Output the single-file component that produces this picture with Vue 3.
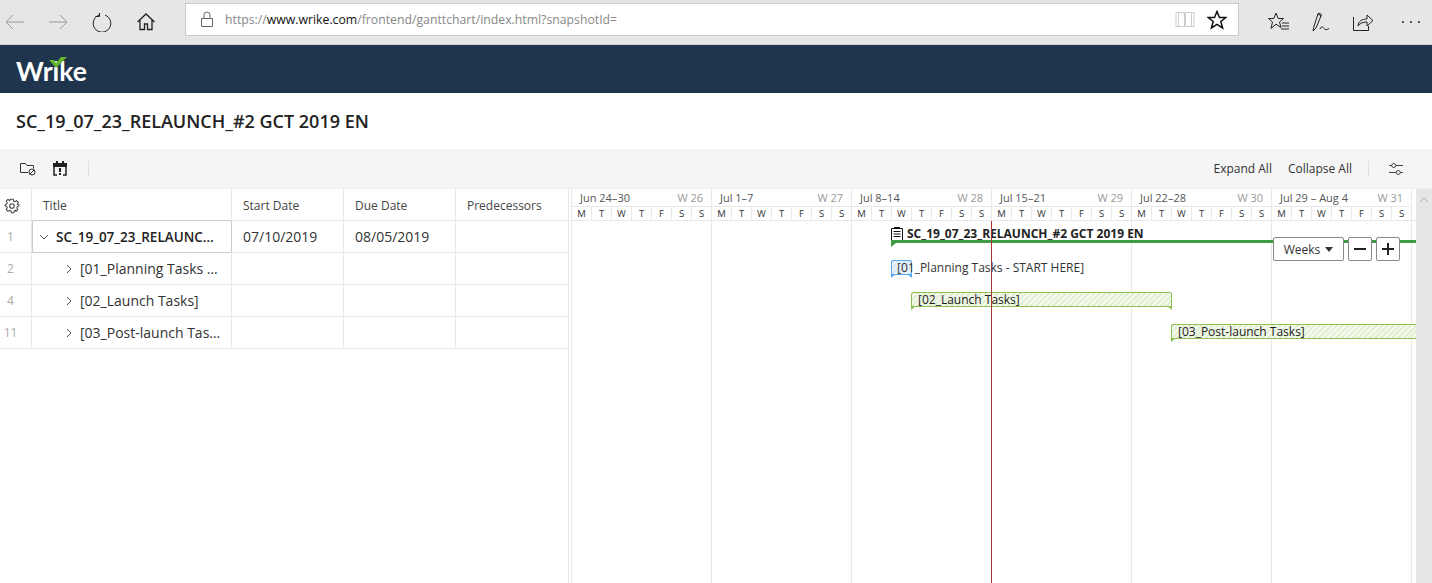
<script setup>
const rows = [
  { n: 1, title: 'SC_19_07_23_RELAUNCH_#2 GCT 2019 EN', start: '07/10/2019', due: '08/05/2019', open: true, root: true },
  { n: 2, title: '[01_Planning Tasks - START HERE]', start: '', due: '' },
  { n: 4, title: '[02_Launch Tasks]', start: '', due: '' },
  { n: 11, title: '[03_Post-launch Tasks]', start: '', due: '' },
]
const weeks = [
  ['Jun 24–30', 'W 26'],
  ['Jul 1–7', 'W 27'],
  ['Jul 8–14', 'W 28'],
  ['Jul 15–21', 'W 29'],
  ['Jul 22–28', 'W 30'],
  ['Jul 29 – Aug 4', 'W 31'],
]
const days = ['M', 'T', 'W', 'T', 'F', 'S', 'S']
</script>

<template>
  <div class="page">
    <div class="browser">
      <div class="nav">
        <svg class="ic muted" width="22" height="16" viewBox="0 0 22 16"><path d="M20 8H2M9 1 2 8l7 7" /></svg>
        <svg class="ic muted" width="22" height="16" viewBox="0 0 22 16"><path d="M2 8h18M13 1l7 7-7 7" /></svg>
        <svg class="ic" width="20" height="20" viewBox="0 0 20 20"><path d="M7 2.600A8.800 8.800 0 1 0 13 2.600M7.500 .5v3.500H3.500" transform="translate(0 .5)" /></svg>
        <svg class="ic" width="20" height="20" viewBox="0 0 20 20"><path d="M1.500 10 10 2l8.500 8M4 8v9.500h4.500V12h3v5.500H16V8" stroke-width="1.300" /></svg>
      </div>
      <div class="address">
        <svg class="ic lock" width="14" height="17" viewBox="0 0 14 17"><path d="M1.500 7.500h11v8h-11zM4 7.500V4a3 3 0 0 1 6 0v3.500" /></svg>
        <div class="url">https://<b>www.wrike.com</b>/frontend/ganttchart/index.html?snapshotId=</div>
        <svg class="ic book" width="20" height="17" viewBox="0 0 20 17"><path d="M1 1.500h8.500v14H1zM10.500 1.500H19v14h-8.500zM3.500 1.500v14M16.500 1.500v14" /></svg>
        <svg class="ic star" width="20" height="20" viewBox="0 0 20 20"><path d="m10 1.500 2.500 6h6.300l-5 4 1.800 6.500L10 14.300 4.400 18l1.800-6.500-5-4h6.300z" /></svg>
      </div>
      <div class="tools">
        <svg class="ic" width="22" height="20" viewBox="0 0 22 20"><path d="m8 1 2.200 5.500H15.500l-4 3.500 1.500 5.500-5-3.300-5 4.300 1.500-6.500L.5 6.500h5.300zM14 11h7M14 14h7M13 17h8" /></svg>
        <svg class="ic" width="20" height="20" viewBox="0 0 20 20"><path d="M3 14 2 19l3-3 5-12-3-2zM6.500 3.500l1-2.500 3 1.500-1 2.500M9 17c2-4 3-2 4-.5s2.500 1.500 5 0" /></svg>
        <svg class="ic" width="22" height="20" viewBox="0 0 22 20"><path d="M1.500 5v13.500h15V14M6 14c.5-5 4-7 9-7V3l6 5.500-6 5.500v-4c-4 0-7 1-9 4z" /></svg>
        <div class="dots"><i></i><i></i><i></i></div>
      </div>
    </div>

    <header class="brand">
      <div class="logo">
        <span>Wrike</span>
        <svg width="18" height="11" viewBox="0 0 18 11"><path d="M0 3h5l2 3 5-6h6L7 11z" fill="#65b32e" /></svg>
      </div>
    </header>

    <h1 class="title">SC_19_07_23_RELAUNCH_#2 GCT 2019 EN</h1>

    <div class="toolbar">
      <div class="group">
        <svg class="tb" width="16" height="14" viewBox="0 0 16 14"><path d="M.500 1.500h5l1.500 2h6.500v3M.500 1.500v9h7.500" fill="none" stroke="#333" /><circle cx="12" cy="10" r="3" fill="none" stroke="#333" /><path d="m10 12 4-4" stroke="#333" /></svg>
        <svg class="tb" width="14" height="15" viewBox="0 0 14 15"><path d="M0 2h14v4H0z" fill="#222" /><path d="M3 0h2v3H3zM9 0h2v3H9z" fill="#222" /><path d="M1 6v8h3M13 6v8h-3" fill="none" stroke="#222" stroke-width="1.500" /><path d="M6 7h2v4H6zM6 12h2v2H6z" fill="#222" /></svg>
        <span class="sep"></span>
      </div>
      <div class="group right">
        <span class="link">Expand All</span>
        <span class="link">Collapse All</span>
        <span class="sep"></span>
        <svg class="tb" width="14" height="14" viewBox="0 0 14 14" fill="none" stroke="#444"><path d="M0 3.500h2.500M7 3.500h7M0 10.500h7M11.500 10.500H14" /><circle cx="4.700" cy="3.500" r="2" /><circle cx="9.300" cy="10.500" r="2" /></svg>
      </div>
    </div>

    <main class="content">
      <section class="table">
        <div class="row head">
          <div class="c num">
            <svg width="16" height="16" viewBox="0 0 24 24" fill="none" stroke="#444" stroke-width="1.700"><circle cx="12" cy="12" r="3.400" /><path d="M10 2h4l.6 3 2.400 1 2.600-1.700 2.800 2.800L20.700 10l2.300.8v2.400l-2.300.8-1 2.200 1.700 2.700-2.800 2.800L18 20l-2.400 1-.6 3h-4l-.6-3L8 20l-2.600 1.700-2.800-2.800L4.300 16l-1-2.200L1 13v-2.400L3.300 10l1-2.200-1.700-2.700 2.800-2.800L8 4z" transform="translate(12 12) scale(.92) translate(-12 -13)" /></svg>
          </div>
          <div class="c t">Title</div>
          <div class="c d">Start Date</div>
          <div class="c d">Due Date</div>
          <div class="c d">Predecessors</div>
        </div>
        <div v-for="r in rows" :key="r.n" class="row">
          <div class="c num n">{{ r.n }}</div>
          <div class="c t" :class="{ sel: r.root }">
            <svg class="chev" :class="{ deep: !r.root }" width="10" height="10" viewBox="0 0 10 10" fill="none" stroke="#555">
              <path :d="r.open ? 'M1 3l4 4 4-4' : 'M3 1l4 4-4 4'" />
            </svg>
            <span class="ttl" :class="{ bold: r.root }">{{ r.title }}</span>
          </div>
          <div class="c d">{{ r.start }}</div>
          <div class="c d">{{ r.due }}</div>
          <div class="c d"></div>
        </div>
      </section>

      <section class="gantt">
        <div class="weeks">
          <div v-for="w in weeks" :key="w[0]" class="week">
            <div class="wtop"><span>{{ w[0] }}</span><em>{{ w[1] }}</em></div>
            <div class="wdays"><span v-for="(d, i) in days" :key="i">{{ d }}</span></div>
          </div>
        </div>
        <div class="canvas">
          <div class="cols"><div v-for="w in weeks" :key="w[0]"></div></div>

          <div class="task root">
            <svg width="12" height="14" viewBox="0 0 12 14" fill="none" stroke="#111"><path d="M.500 1.500h11v12H.500zM2.500 4.500h7M2.500 7h7M2.500 9.500h7" /><path d="M3 0h6v2H3z" fill="#111" stroke="none" /></svg>
            <span>SC_19_07_23_RELAUNCH_#2 GCT 2019 EN</span>
          </div>
          <div class="rootbar"></div>

          <div class="bar blue"></div>
          <div class="lbl">[01_Planning Tasks - START HERE]</div>

          <div class="bar green b2"><span>[02_Launch Tasks]</span></div>
          <div class="bar green b3"><span>[03_Post-launch Tasks]</span></div>

          <div class="today"></div>

          <div class="zoom">
            <button class="btn weeksel">Weeks <i></i></button>
            <button class="btn sq"><svg width="14" height="14" viewBox="0 0 14 14"><path d="M1 7h12" stroke="#222" stroke-width="2" /></svg></button>
            <button class="btn sq"><svg width="14" height="14" viewBox="0 0 14 14"><path d="M1 7h12M7 1v12" stroke="#222" stroke-width="2" /></svg></button>
          </div>
        </div>
      </section>

      <aside class="scroll">
        <svg width="10" height="6" viewBox="0 0 10 6" fill="none" stroke="#aaa"><path d="m1 5 4-4 4 4" /></svg>
      </aside>
    </main>
  </div>
</template>

<style>
html, body { margin: 0; background: #fff; }
</style>

<style scoped>
.page {
  width: 1432px;
  height: 583px;
  overflow: hidden;
  display: flex;
  flex-direction: column;
  font-family: "Open Sans", sans-serif;
  color: #333;
  font-size: 12px;
}
.ic { fill: none; stroke: #222; stroke-width: 1; display: block; }
.ic.muted { stroke: #999; }
.ic.star { stroke-width: 1.500; stroke: #111; }
.browser {
  height: 45px;
  flex: none;
  box-sizing: border-box;
  background: #e6e6e6;
  border-bottom: 1px solid #ccc;
  display: flex;
  align-items: center;
}
.nav { width: 185px; flex: none; display: flex; align-items: center; padding-left: 4px; box-sizing: border-box; gap: 21px; }
.nav svg:nth-child(3) { margin-left: 2px; }
.nav svg:nth-child(4) { margin-left: 3px; }
.address {
  width: 1054px;
  height: 33px;
  flex: none;
  box-sizing: border-box;
  margin-top: -5px;
  background: #fff;
  border: 1px solid #ccc;
  display: flex;
  align-items: center;
  padding: 0 11px 0 14px;
}
.lock { stroke: #666; }
.url { flex: 1; margin-left: 11px; font-size: 12.250px; color: #888; }
.url b { font-weight: 400; color: #111; }
.book { stroke: #ccc; margin-right: 12px; }
.tools { flex: 1; display: flex; align-items: center; padding-left: 29px; gap: 21px; margin-top: -1px; }
.dots { display: flex; gap: 6px; margin-left: 7px; }
.dots i { width: 2px; height: 2px; background: #222; border-radius: 50%; }

.brand { height: 48px; flex: none; background: #1f354d; display: flex; align-items: center; padding-left: 16px; }
.logo { position: relative; color: #fff; font: 700 26.500px/1 "Lato", sans-serif; margin-top: 4px; }
.logo svg { position: absolute; left: 33px; top: -1px; }

.title { margin: 0; height: 56px; flex: none; box-sizing: border-box; padding-left: 16px; font-size: 18px; font-weight: 600; color: #222; line-height: 56px; }

.toolbar {
  height: 40px;
  flex: none;
  box-sizing: border-box;
  background: #f5f5f5;
  border-bottom: 1px solid #eee;
  display: flex;
  justify-content: space-between;
  align-items: center;
  padding: 0 29px 0 20px;
}
.group { display: flex; align-items: center; gap: 17px; }
.group.right { gap: 16px; }
.sep { width: 1px; height: 16px; background: #ddd; margin-left: 4px; }
.group.right .sep { margin-left: 0; margin-right: 4px; }
.link { font-size: 12px; color: #333; }

.content { flex: 1; display: flex; min-height: 0; }
.table { width: 569px; flex: none; box-sizing: border-box; border-right: 1px solid #e8e8e8; }
.row { height: 32px; display: flex; border-bottom: 1px solid #e8e8e8; box-sizing: border-box; font-size: 14px; }
.row.head { font-size: 12px; color: #444; }
.head .c { padding-top: 2px; }
.c { display: flex; align-items: center; border-right: 1px solid #e8e8e8; box-sizing: border-box; padding-left: 11px; min-width: 0; }
.c:last-child { border-right: 0; }
.num { width: 32px; padding-left: 0; justify-content: center; flex: none; }
.num.n { color: #aaa; font-size: 12px; padding-right: 10px; }
.head .num { justify-content: flex-start; padding-left: 4px; }
.t { width: 200px; flex: none; }
.d { width: 112px; flex: none; }
.sel { border: 1px solid #ccc; border-radius: 2px; height: 33px; margin-top: -1px; padding-left: 6px; }
.chev { flex: none; margin-right: 7px; }
.chev.deep { margin-left: 21px; margin-right: 6px; }
.ttl { white-space: nowrap; overflow: hidden; text-overflow: ellipsis; padding-right: 10px; }
.bold { font-weight: 600; color: #222; font-size: 13.500px; }

.gantt { flex: none; width: 845px; margin-left: 2px; border-left: 1px solid #e8e8e8; box-sizing: border-box; overflow: hidden; display: flex; flex-direction: column; }
.weeks { display: flex; flex: none; width: 860px; height: 32px; border-bottom: 1px solid #e8e8e8; box-sizing: border-box; }
.week { width: 140px; flex: none; box-sizing: border-box; }
.wtop { height: 18px; display: flex; justify-content: space-between; align-items: center; box-sizing: border-box; padding: 0 8px; border-right: 1px solid #e8e8e8; border-bottom: 1px solid #e8e8e8; font-size: 11px; color: #555; }
.wtop em { font-style: normal; color: #999; }
.wdays { height: 13px; display: flex; }
.wdays span { width: 20px; box-sizing: border-box; border-right: 1px solid #e8e8e8; text-align: center; font-size: 9.500px; line-height: 13px; color: #333; }

.canvas { position: relative; flex: 1; }
.cols { display: flex; height: 100%; }
.cols div { width: 140px; flex: none; box-sizing: border-box; border-right: 1px solid #e8e8e8; }

.task { position: absolute; left: 319px; top: 4px; display: flex; align-items: center; gap: 4px; font-size: 12px; font-weight: 700; color: #222; white-space: nowrap; }
.rootbar { position: absolute; left: 319px; right: 0; top: 19px; height: 3px; background: #3f9c45; }
.rootbar::after { content: ""; position: absolute; left: 0; top: 3px; border-top: 4px solid #3f9c45; border-right: 5px solid transparent; }
.lbl { position: absolute; left: 325px; top: 38px; font-size: 12px; white-space: nowrap; color: #333; }
.bar { position: absolute; box-sizing: border-box; height: 15px; font-size: 12px; line-height: 14px; color: #222; white-space: nowrap; border-radius: 2px 2px 0 0; }
.bar::before, .bar::after { content: ""; position: absolute; top: 100%; border-top: 4px solid; }
.bar::before { left: -1px; border-right: 5px solid transparent; }
.bar::after { right: -1px; border-left: 5px solid transparent; }
.bar span { padding-left: 6px; }
.blue {
  left: 319px; top: 39px; width: 21px;
  border: 1px solid #5aa9ee;
  background: repeating-linear-gradient(135deg, #d6e8f9 0 2px, #eef6fd 2px 4px);
}
.blue::before, .blue::after { border-top-color: #5aa9ee; }
.green { border: 1px solid #8cc152; background: repeating-linear-gradient(135deg, #e3efd5 0 2px, #f5faef 2px 4px); }
.green::before, .green::after { border-top-color: #8cc152; }
.b2 { left: 339px; top: 71px; width: 261px; }
.b3 { left: 599px; top: 103px; width: 262px; }
.today { position: absolute; left: 419px; top: 0; bottom: 0; width: 1px; background: #a33; }

.zoom { position: absolute; left: 701px; top: 16px; display: flex; gap: 4px; }
.btn { box-sizing: border-box; height: 24px; background: #fff; border: 1px solid #888; border-radius: 2px; padding: 0; font: 12px "Open Sans", sans-serif; color: #333; display: flex; align-items: center; justify-content: center; }
.weeksel { width: 71px; gap: 5px; }
.weeksel i { width: 0; height: 0; border-left: 4px solid transparent; border-right: 4px solid transparent; border-top: 5px solid #333; margin-top: 1px; }
.sq { width: 24px; }

.scroll { flex: 1; background: #e6e6e6; display: flex; justify-content: center; padding-top: 8px; height: 100%; box-sizing: border-box; align-items: flex-start; }
</style>
